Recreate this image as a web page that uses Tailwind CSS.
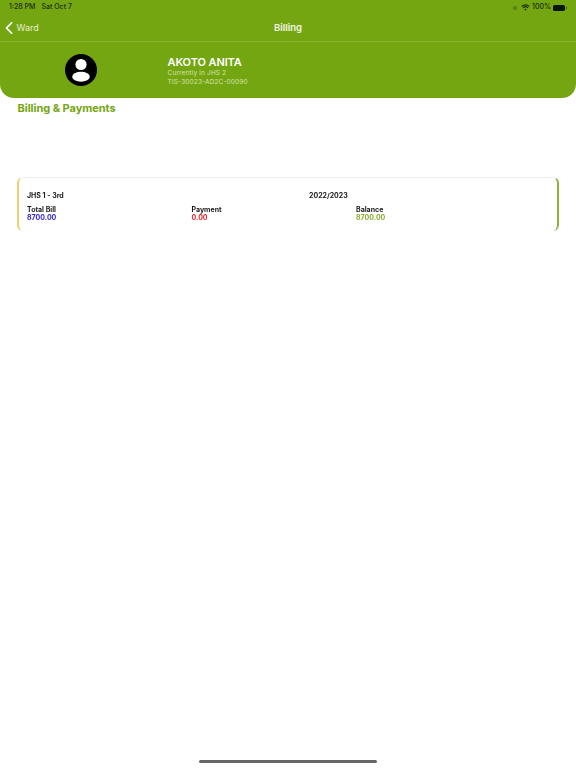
<!DOCTYPE html>
<html>
<head>
    <title>Billing</title>
    <script src="https://cdn.jsdelivr.net/npm/@tailwindcss/browser@4"></script>
</head>
<body class="bg-white font-['Inter','Liberation_Sans',sans-serif]">
    <main class="relative w-[576px] h-[768px] overflow-hidden bg-white">
        <!-- green header -->
        <header class="h-[98px] bg-[#74a612] rounded-b-[14px]">
            <div class="h-[14px] pt-[1px] pl-[9px] pr-[9px] flex items-center justify-between text-[7px] font-medium text-[#1c2a05]">
                <div class="flex gap-[6px]">
                    <span>1:28 PM</span>
                    <span>Sat Oct 7</span>
                </div>
                <div class="flex items-center gap-[2px]">
                    <span class="w-[4px] h-[4px] mr-[2px] rounded-full border border-[#4c7010]"></span>
                    <svg width="9" height="7" viewBox="0 0 10 8" fill="none" stroke="#1c2a05" stroke-width="1.3">
                        <path d="M0.6 2.8a6.2 6.2 0 0 1 8.8 0"/>
                        <path d="M2.2 4.4a4 4 0 0 1 5.6 0"/>
                        <path d="M5 7.6L3.7 6a1.9 1.9 0 0 1 2.6 0z" fill="#1c2a05" stroke="none"/>
                    </svg>
                    <span class="mr-[-1px]">100%</span>
                    <span class="ml-[1px] w-[12px] h-[6px] rounded-[1.5px] bg-[#0c1402]"></span>
                    <span class="w-[1px] h-[2px] -ml-[1px] bg-[#3c5a0a]"></span>
                </div>
            </div>
            <nav class="relative h-[25px] pt-[2px] flex items-center justify-center border-b border-[#86b32e] box-content">
                <div class="absolute left-[5px] top-[8px] flex items-center gap-[3.5px] text-white">
                    <svg width="8" height="12" viewBox="0 0 9 14" fill="none" stroke="white" stroke-width="2" stroke-linecap="round" stroke-linejoin="round">
                        <path d="M7.5 1L1.5 7l6 6"/>
                    </svg>
                    <span class="text-[9px] leading-[12px] text-[#e6efd0]">Ward</span>
                </div>
                <span class="text-[9.5px] font-semibold text-[#f4f8e8]">Billing</span>
            </nav>
            <div class="flex items-start">
                <div class="w-[162px] pt-[12px] flex justify-center">
                    <svg width="32" height="32" viewBox="0 0 32 32">
                        <circle cx="16" cy="16" r="16" fill="#000"/>
                        <circle cx="16" cy="10.5" r="5.6" fill="#fff"/>
                        <ellipse cx="16" cy="22.8" rx="8.8" ry="5" fill="#fff"/>
                    </svg>
                </div>
                <div class="pl-[5.5px] pt-[14px]">
                    <p class="text-[11px] leading-[12px] tracking-[-0.1px] font-semibold text-white">AKOTO ANITA</p>
                    <p class="mt-[1px] text-[6.5px] leading-[9px] tracking-[0.15px] text-[#d4e4ae]">Currently in JHS 2</p>
                    <p class="text-[6.5px] leading-[9px] tracking-[0.15px] text-[#d4e4ae]">TIS-30023-AD2C-00090</p>
                </div>
            </div>
        </header>

        <h1 class="mt-[3px] ml-[17.5px] text-[11px] leading-[14px] tracking-[-0.05px] font-bold text-[#74a612]">Billing &amp; Payments</h1>

        <!-- bill card -->
        <section class="transform-gpu mt-[62px] mx-[17px] h-[54px] rounded-[6px] border-t border-t-[#eeeeee] border-l-2 border-l-[#f0cf6e] border-r-2 border-r-[#8fb03c] pl-[8px] pt-[13px]">
            <div class="flex text-[7px] leading-[9px] font-bold text-[#1a1a1a]">
                <span class="w-[282px]">JHS 1 - 3rd</span>
                <span>2022/2023</span>
            </div>
            <div class="mt-[6px] grid grid-cols-[164.5px_164.5px_1fr] text-[7px] leading-[8px] font-bold">
                <div>
                    <p class="text-[#1a1a1a]">Total Bill</p>
                    <p class="text-[#2d1fd6]">8700.00</p>
                </div>
                <div>
                    <p class="text-[#1a1a1a]">Payment</p>
                    <p class="text-[#e0262e]">0.00</p>
                </div>
                <div>
                    <p class="text-[#1a1a1a]">Balance</p>
                    <p class="text-[#8aae2e]">8700.00</p>
                </div>
            </div>
        </section>

        <!-- home indicator -->
        <div class="absolute left-[199px] top-[760px] w-[178px] h-[3px] rounded-full bg-[#666666]"></div>
    </main>
</body>
</html>
